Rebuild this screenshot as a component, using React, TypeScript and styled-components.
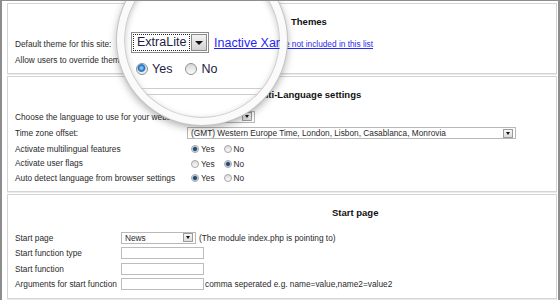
import React from "react";
import styled, { createGlobalStyle } from "styled-components";

const GlobalStyle = createGlobalStyle`
  html, body {
    margin: 0;
    padding: 0;
    background: #fff;
  }
  body {
    font-family: "Liberation Sans", Arial, sans-serif;
  }
`;

const Frame = styled.div`
  position: relative;
  width: 560px;
  height: 300px;
  box-sizing: border-box;
  border: 2px solid #8d8d8d;
  border-top-width: 1px;
  border-bottom: none;
  padding: 2px 1px 0 5px;
  background: #fff;
  overflow: hidden;
  font-size: 8.3px;
  color: #2a2a2a;
`;

const Panel = styled.section<{ $h: number }>`
  height: ${(p) => p.$h}px;
  box-sizing: border-box;
  border: 1px solid #d4d4d4;
  box-shadow: 0 1px 0 #ececec;
  margin-bottom: 2px;
  padding: 11px 7px 0;
`;

const Title = styled.div<{ $indent: number; $after: number }>`
  height: 14px;
  line-height: 14px;
  padding-left: ${(p) => p.$indent}px;
  margin-bottom: ${(p) => p.$after}px;
  font-weight: bold;
  font-size: 9.5px;
  color: #111;
`;

const Row = styled.div<{ $h: number; $label: number }>`
  display: grid;
  grid-template-columns: ${(p) => p.$label}px 1fr;
  align-items: center;
  height: ${(p) => p.$h}px;
  white-space: nowrap;
`;

const Controls = styled.div`
  display: flex;
  align-items: center;
`;

const SelectBox = styled.div<{ $w: number }>`
  box-sizing: border-box;
  width: ${(p) => p.$w}px;
  height: 12px;
  border: 1px solid #b8b8b8;
  background: #fff;
  display: flex;
  align-items: center;
  justify-content: space-between;
  padding: 0 2px 0 3px;
  overflow: hidden;
`;

const DropButton = styled.span`
  flex: none;
  width: 10px;
  height: 9px;
  box-sizing: border-box;
  border: 1px solid #9c9c9c;
  background: linear-gradient(#f7f7f7, #dcdcdc);
  display: flex;
  align-items: center;
  justify-content: center;
  &::after {
    content: "";
    border-left: 2.5px solid transparent;
    border-right: 2.5px solid transparent;
    border-top: 3px solid #111;
  }
`;

const TextInput = styled.span`
  box-sizing: border-box;
  width: 83px;
  height: 12px;
  border: 1px solid #bcbcbc;
  background: #fff;
`;

const Note = styled.span<{ $gap: number }>`
  margin-left: ${(p) => p.$gap}px;
`;

const Link = styled.span`
  margin-left: 3px;
  color: #2b2bf0;
  text-decoration: underline;
`;

const RadioGroup = styled.div`
  display: flex;
  align-items: center;
  padding-left: 4px;
  padding-top: 1px;
`;

const RadioDot = styled.span<{ $on: boolean }>`
  width: 8px;
  height: 8px;
  border-radius: 50%;
  box-sizing: border-box;
  border: 1px solid #a5a5a5;
  margin-right: 2px;
  background: ${(p) =>
    p.$on
      ? "radial-gradient(circle, #27486f 0 1.5px, #7c9fc6 2.2px, #eef2f6 3px)"
      : "linear-gradient(#dcdcdc, #fbfbfb)"};
`;

const RadioText = styled.span`
  margin-right: 9px;
`;

/* magnifier lens */

const Lens = styled.div`
  position: absolute;
  left: 115px;
  top: -46px;
  width: 170px;
  height: 170px;
  box-sizing: border-box;
  border-radius: 50%;
  border: 7px solid #fafafa;
  background: #fff;
  overflow: hidden;
  box-shadow: 0 0 0 1px #c4c4c4, 0 3px 9px rgba(0, 0, 0, 0.35),
    inset 0 0 0 1px #cfcfcf, inset 0 2px 7px rgba(0, 0, 0, 0.28);
`;

const Sheet = styled.div`
  position: absolute;
  left: 7px;
  top: 70px;
  display: flex;
  flex-direction: column;
  font-size: 12.5px;
  color: #1e1c44;
  white-space: nowrap;
`;

const BigRow = styled.div`
  display: flex;
  align-items: center;
`;

const BigSelect = styled.div`
  box-sizing: border-box;
  width: 78px;
  height: 21px;
  border: 1px solid #8c8c8c;
  padding: 1px;
  display: flex;
  gap: 1px;
  background: #fff;
`;

const FocusText = styled.span`
  flex: 1;
  border: 1px dotted #222;
  padding-left: 3px;
  line-height: 15px;
`;

const BigButton = styled.span`
  width: 16px;
  box-sizing: border-box;
  border: 1px solid #8a8a8a;
  background: linear-gradient(#f3f3f3, #d2d2d2);
  display: flex;
  align-items: center;
  justify-content: center;
  &::after {
    content: "";
    border-left: 4px solid transparent;
    border-right: 4px solid transparent;
    border-top: 4px solid #111;
  }
`;

const BigLink = styled.span`
  margin-left: 5px;
  color: #1f1ff5;
  text-decoration: underline;
`;

const BigRadios = styled.div`
  display: flex;
  align-items: center;
  height: 14px;
  margin: 9px 0 0 5px;
`;

const BigDot = styled.span<{ $on: boolean }>`
  width: 12px;
  height: 12px;
  border-radius: 50%;
  box-sizing: border-box;
  border: 1px solid #8f8f8f;
  margin-right: 4px;
  background: ${(p) =>
    p.$on
      ? "radial-gradient(circle at 45% 40%, #7fc4f2 0 1px, #1f6fbe 3px, #3c8ad0 3.6px, #e9eef3 4.4px)"
      : "linear-gradient(#d6d6d6, #fdfdfd)"};
`;

const BigRadioText = styled.span`
  margin-right: 13px;
`;

const BigRule = styled.div<{ $top: number }>`
  margin: ${(p) => p.$top}px 0 0 -30px;
  width: 240px;
  height: 1px;
  background: #cdcdcd;
`;

type RadioPairProps = { yes: boolean };

const RadioPair: React.FC<RadioPairProps> = ({ yes }) => (
  <RadioGroup>
    <RadioDot $on={yes} />
    <RadioText>Yes</RadioText>
    <RadioDot $on={!yes} />
    <RadioText>No</RadioText>
  </RadioGroup>
);

const Select: React.FC<{ width: number; value: string }> = ({ width, value }) => (
  <SelectBox $w={width}>
    <span>{value}</span>
    <DropButton />
  </SelectBox>
);

const App: React.FC = () => {
  return (
    <>
      <GlobalStyle />
      <Frame>
        <Panel $h={71}>
          <Title $indent={276} $after={6.5}>
            Themes
          </Title>
          <Row $h={16} $label={150}>
            <span>Default theme for this site:</span>
            <Controls>
              <Select width={45} value="ExtraLite" />
              <Link>Inactive Xaramat are not included in this list</Link>
            </Controls>
          </Row>
          <Row $h={16} $label={150}>
            <span>Allow users to override theme</span>
            <RadioPair yes />
          </Row>
        </Panel>

        <Panel $h={116}>
          <Title $indent={237} $after={6.5}>
            Multi-Language settings
          </Title>
          <Row $h={16.5} $label={172}>
            <span>Choose the language to use for your website</span>
            <Controls>
              <Select width={68} value="English" />
            </Controls>
          </Row>
          <Row $h={16.5} $label={172}>
            <span>Time zone offset:</span>
            <Controls>
              <Select
                width={329}
                value="(GMT) Western Europe Time, London, Lisbon, Casablanca, Monrovia"
              />
            </Controls>
          </Row>
          <Row $h={14.5} $label={172}>
            <span>Activate multilingual features</span>
            <RadioPair yes />
          </Row>
          <Row $h={14.5} $label={172}>
            <span>Activate user flags</span>
            <RadioPair yes={false} />
          </Row>
          <Row $h={14.5} $label={172}>
            <span>Auto detect language from browser settings</span>
            <RadioPair yes />
          </Row>
        </Panel>

        <Panel $h={105}>
          <Title $indent={317} $after={10}>
            Start page
          </Title>
          <Row $h={15.5} $label={106}>
            <span>Start page</span>
            <Controls>
              <Select width={75} value="News" />
              <Note $gap={3}>(The module index.php is pointing to)</Note>
            </Controls>
          </Row>
          <Row $h={15.5} $label={106}>
            <span>Start function type</span>
            <Controls>
              <TextInput />
            </Controls>
          </Row>
          <Row $h={15.5} $label={106}>
            <span>Start function</span>
            <Controls>
              <TextInput />
            </Controls>
          </Row>
          <Row $h={15.5} $label={106}>
            <span>Arguments for start function</span>
            <Controls>
              <TextInput />
              <Note $gap={1}>comma seperated e.g. name=value,name2=value2</Note>
            </Controls>
          </Row>
        </Panel>

        <Lens>
          <Sheet>
            <BigRow>
              <BigSelect>
                <FocusText>ExtraLite</FocusText>
                <BigButton />
              </BigSelect>
              <BigLink>Inactive Xaramat are not included in this list</BigLink>
            </BigRow>
            <BigRadios>
              <BigDot $on />
              <BigRadioText>Yes</BigRadioText>
              <BigDot $on={false} />
              <span>No</span>
            </BigRadios>
            <BigRule $top={12} />
            <BigRule $top={5} />
          </Sheet>
        </Lens>
      </Frame>
    </>
  );
};

export default App;
